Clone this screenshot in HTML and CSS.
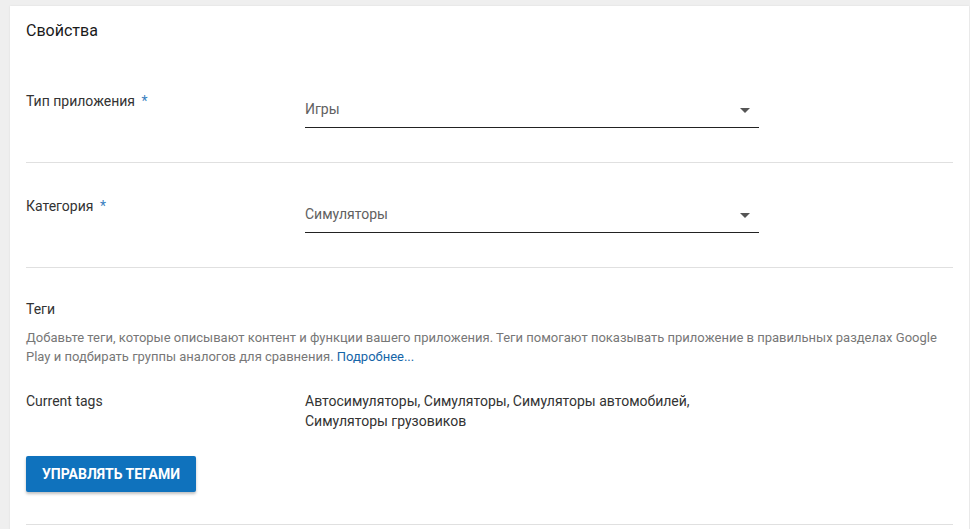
FILE: index.html
```html
<!DOCTYPE html>
<html lang="ru">
<head>
    <meta charset="UTF-8">
    <meta name="viewport" content="width=device-width, initial-scale=1.0">
    <title>Свойства</title>
    <link rel="stylesheet" href="styles.css">
</head>
<body>
    <div class="card">
        <h2 class="card-title">Свойства</h2>

        <div class="row">
            <div class="label">Тип приложения <span class="req">*</span></div>
            <div class="select">
                <span class="select-value">Игры</span>
                <span class="arrow"></span>
            </div>
        </div>

        <div class="row">
            <div class="label">Категория <span class="req">*</span></div>
            <div class="select">
                <span class="select-value">Симуляторы</span>
                <span class="arrow"></span>
            </div>
        </div>

        <div class="tags">
            <div class="tags-title">Теги</div>
            <p class="tags-desc">Добавьте теги, которые описывают контент и функции вашего приложения. Теги помогают показывать приложение в правильных разделах Google Play и подбирать группы аналогов для сравнения. <a href="#">Подробнее...</a></p>
            <div class="current">
                <div class="label">Current tags</div>
                <div class="current-value">Автосимуляторы, Симуляторы, Симуляторы автомобилей, Симуляторы грузовиков</div>
            </div>
            <button class="btn">Управлять тегами</button>
        </div>
    </div>
</body>
</html>
```

FILE: styles.css
```css
body {
    margin: 0;
    background: #efefef;
    font-family: Roboto, "Noto Sans", Arial, sans-serif;
    color: #212121;
}

.card {
    margin: 6px 1px 0 10px;
    background: #fff;
    padding: 0 16px;
    box-shadow: 0 0 2px rgba(0,0,0,0.08);
    min-height: 530px;
}

.card-title {
    margin: 0;
    padding: 15px 0 17px;
    font-size: 16px;
    line-height: 20px;
    font-weight: 400;
    color: #1a1a1a;
}

.row {
    display: flex;
    padding: 33px 0 34px;
    border-bottom: 1px solid #e0e0e0;
}

.label {
    width: 279px;
    flex-shrink: 0;
    font-size: 14px;
    line-height: 20px;
    color: #333;
}

.req {
    color: #3a7fc0;
    margin-left: 3px;
}

.select {
    width: 454px;
    display: flex;
    align-items: center;
    justify-content: space-between;
    padding: 8px 0 8px;
    border-bottom: 1px solid #222;
}

.select-value {
    font-size: 14px;
    line-height: 20px;
    color: #616161;
}

.arrow {
    width: 0;
    height: 0;
    border-left: 5px solid transparent;
    border-right: 5px solid transparent;
    border-top: 5px solid #555;
    margin-right: 9px;
    margin-top: 2px;
}

.tags {
    padding: 31px 0 32px;
    border-bottom: 1px solid #e0e0e0;
}

.tags-title {
    font-size: 14px;
    line-height: 20px;
    color: #333;
}

.tags-desc {
    margin: 9px 0 0;
    font-size: 13px;
    line-height: 19px;
    color: #777;
}

.tags-desc a {
    color: #1565a8;
    text-decoration: none;
}

.current {
    display: flex;
    margin-top: 25px;
}

.current-value {
    width: 454px;
    font-size: 14px;
    line-height: 20px;
    color: #333;
}

.btn {
    display: block;
    margin-top: 25px;
    height: 36px;
    padding: 0;
    width: 170px;
    background: #0f72bd;
    color: #fff;
    border: none;
    border-radius: 2px;
    font-family: Roboto, Arial, sans-serif;
    font-size: 14px;
    font-weight: 700;
    text-transform: uppercase;
    box-shadow: 0 2px 3px rgba(0,0,0,0.25);
    cursor: pointer;
}
```
